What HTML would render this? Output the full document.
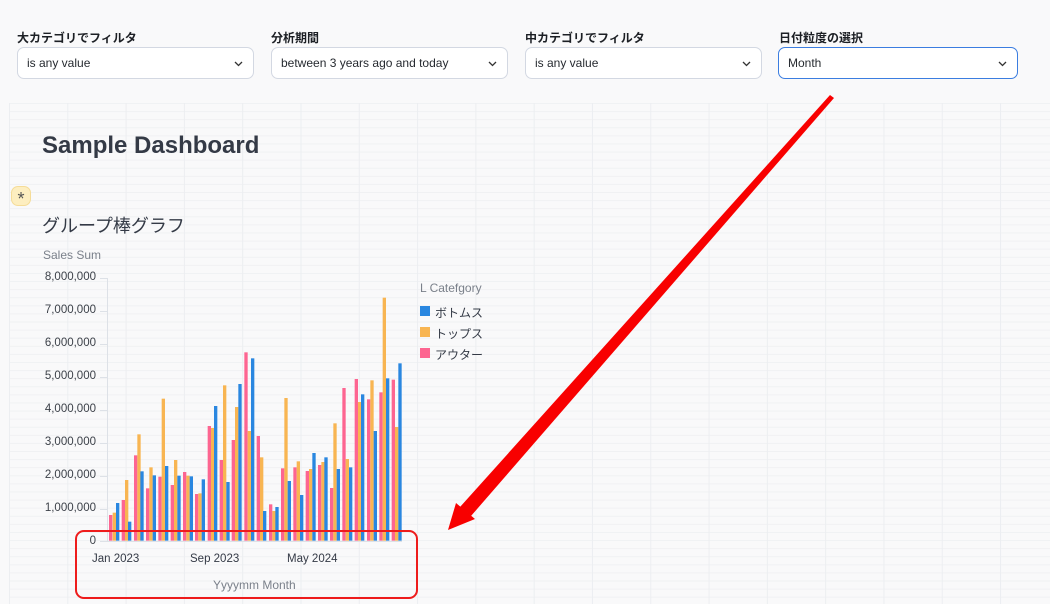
<!DOCTYPE html>
<html><head><meta charset="utf-8"><style>
body{margin:0;width:1050px;height:604px;overflow:hidden;background:#f9f9fa;font-family:"Liberation Sans","Noto Sans CJK JP",sans-serif;position:relative}
.grid{position:absolute;left:9px;top:103px;width:1041px;height:501px;
background-image:linear-gradient(to right,#eceef1 1px,transparent 1px),linear-gradient(to bottom,#f0f1f3 1px,transparent 1px);
background-size:58.3px 100%,100% 8.1px;}
.lbl{position:absolute;top:29px;font-size:12px;font-weight:bold;color:#1c1f24}
.sel{position:absolute;top:47px;height:32px;width:237px;box-sizing:border-box;border:1px solid #d3d8e2;border-radius:7px;background:#fff;font-size:12px;color:#262a30;line-height:31px;padding-left:9px}
.sel svg{position:absolute;right:10px;top:13px}
.t{position:absolute;color:#343a46}
.yl{position:absolute;right:954px;font-size:11.5px;color:#3c4149;text-align:right}
</style></head><body>
<div class="grid"></div>
<div class="lbl" style="left:17px">大カテゴリでフィルタ</div>
<div class="lbl" style="left:271px">分析期間</div>
<div class="lbl" style="left:525px">中カテゴリでフィルタ</div>
<div class="lbl" style="left:779px">日付粒度の選択</div>
<div class="sel" style="left:17px">is any value<svg width="9" height="6"><path d="M1 1l3.5 3.5L8 1" fill="none" stroke="#333" stroke-width="1.3"/></svg></div>
<div class="sel" style="left:271px">between 3 years ago and today<svg width="9" height="6"><path d="M1 1l3.5 3.5L8 1" fill="none" stroke="#333" stroke-width="1.3"/></svg></div>
<div class="sel" style="left:525px">is any value<svg width="9" height="6"><path d="M1 1l3.5 3.5L8 1" fill="none" stroke="#333" stroke-width="1.3"/></svg></div>
<div class="sel" style="left:778px;width:240px;border-color:#3b7de0;border-width:1.5px">Month<svg width="9" height="6"><path d="M1 1l3.5 3.5L8 1" fill="none" stroke="#333" stroke-width="1.3"/></svg></div>
<div class="t" style="left:42px;top:132px;font-size:24px;font-weight:bold">Sample Dashboard</div>
<div style="position:absolute;left:11px;top:186px;width:20px;height:20px;border-radius:7px;background:#fdeec0;border:1px solid #f5dc98;box-sizing:border-box;text-align:center;font-size:18px;line-height:24px;color:#555">*</div>
<div class="t" style="left:42px;top:212px;font-size:18px">グループ棒グラフ</div>
<div class="t" style="left:43px;top:248px;font-size:12px;color:#7a808a">Sales Sum</div>
<div class="yl" style="top:271px">8,000,000</div>
<div class="yl" style="top:304px">7,000,000</div>
<div class="yl" style="top:337px">6,000,000</div>
<div class="yl" style="top:370px">5,000,000</div>
<div class="yl" style="top:403px">4,000,000</div>
<div class="yl" style="top:436px">3,000,000</div>
<div class="yl" style="top:469px">2,000,000</div>
<div class="yl" style="top:502px">1,000,000</div>
<div class="yl" style="top:535px">0</div>
<div class="t" style="left:92px;top:553px;font-size:11.5px">Jan 2023</div>
<div class="t" style="left:190px;top:553px;font-size:11.5px">Sep 2023</div>
<div class="t" style="left:287px;top:553px;font-size:11.5px">May 2024</div>
<div class="t" style="left:213px;top:578px;font-size:12px;color:#7a808a">Yyyymm Month</div>
<div class="t" style="left:420px;top:281px;font-size:12px;color:#7a808a">L Catefgory</div>
<div style="position:absolute;left:420px;top:306px;width:10px;height:10px;background:#2a87e0"></div>
<div class="t" style="left:435px;top:304px;font-size:12px">ボトムス</div>
<div style="position:absolute;left:420px;top:327px;width:10px;height:10px;background:#f8b552"></div>
<div class="t" style="left:435px;top:325px;font-size:12px">トップス</div>
<div style="position:absolute;left:420px;top:348px;width:10px;height:10px;background:#fd6591"></div>
<div class="t" style="left:435px;top:346px;font-size:12px">アウター</div>
<svg width="1050" height="604" style="position:absolute;left:0;top:0">
<g stroke="#dde1e7" stroke-width="1"><line x1="107.5" y1="278" x2="107.5" y2="541"/>
<line x1="100" y1="278.5" x2="107" y2="278.5"/><line x1="100" y1="311.5" x2="107" y2="311.5"/><line x1="100" y1="344.5" x2="107" y2="344.5"/><line x1="100" y1="377.5" x2="107" y2="377.5"/><line x1="100" y1="410.5" x2="107" y2="410.5"/><line x1="100" y1="443.5" x2="107" y2="443.5"/><line x1="100" y1="476.5" x2="107" y2="476.5"/><line x1="100" y1="509.5" x2="107" y2="509.5"/><line x1="100" y1="541.5" x2="402" y2="541.5"/></g>
<g transform="translate(60,270) scale(0.33333)">
<g fill="#fd6591">
<rect x="147" y="735" width="10" height="77"/><rect x="185" y="690" width="10" height="122"/><rect x="222" y="556" width="10" height="256"/><rect x="258" y="655" width="10" height="157"/><rect x="295" y="620" width="10" height="192"/><rect x="332" y="645" width="10" height="167"/><rect x="369" y="606" width="10" height="206"/><rect x="405" y="672" width="10" height="140"/><rect x="443" y="468" width="10" height="344"/><rect x="479" y="570" width="10" height="242"/><rect x="515" y="510" width="10" height="302"/><rect x="553" y="247" width="10" height="565"/><rect x="590" y="498" width="10" height="314"/><rect x="627" y="703" width="10" height="109"/><rect x="663" y="595" width="10" height="217"/><rect x="700" y="592" width="10" height="220"/><rect x="737" y="603" width="10" height="209"/><rect x="774" y="585" width="10" height="227"/><rect x="810" y="654" width="10" height="158"/><rect x="847" y="354" width="10" height="458"/><rect x="884" y="327" width="10" height="485"/><rect x="921" y="388" width="10" height="424"/><rect x="958" y="367" width="10" height="445"/><rect x="995" y="329" width="10" height="483"/>
</g>
<g fill="#f8b552">
<rect x="158" y="728" width="10" height="84"/><rect x="195" y="630" width="10" height="182"/><rect x="232" y="493" width="10" height="319"/><rect x="268" y="592" width="10" height="220"/><rect x="305" y="386" width="10" height="426"/><rect x="342" y="570" width="10" height="242"/><rect x="379" y="617" width="10" height="195"/><rect x="415" y="670" width="10" height="142"/><rect x="453" y="474" width="10" height="338"/><rect x="489" y="346" width="10" height="466"/><rect x="525" y="411" width="10" height="401"/><rect x="563" y="483" width="10" height="329"/><rect x="600" y="562" width="10" height="250"/><rect x="637" y="723" width="10" height="89"/><rect x="673" y="384" width="10" height="428"/><rect x="710" y="574" width="10" height="238"/><rect x="747" y="597" width="10" height="215"/><rect x="784" y="576" width="10" height="236"/><rect x="820" y="460" width="10" height="352"/><rect x="857" y="567" width="10" height="245"/><rect x="894" y="396" width="10" height="416"/><rect x="931" y="331" width="10" height="481"/><rect x="968" y="83" width="10" height="729"/><rect x="1005" y="471" width="10" height="341"/>
</g>
<g fill="#2a87e0">
<rect x="168" y="699" width="10" height="113"/><rect x="204" y="755" width="10" height="57"/><rect x="241" y="604" width="10" height="208"/><rect x="278" y="616" width="10" height="196"/><rect x="315" y="588" width="10" height="224"/><rect x="352" y="617" width="10" height="195"/><rect x="389" y="619" width="10" height="193"/><rect x="425" y="628" width="10" height="184"/><rect x="462" y="408" width="10" height="404"/><rect x="499" y="636" width="10" height="176"/><rect x="535" y="342" width="10" height="470"/><rect x="573" y="265" width="10" height="547"/><rect x="609" y="723" width="10" height="89"/><rect x="646" y="711" width="10" height="101"/><rect x="683" y="633" width="10" height="179"/><rect x="720" y="675" width="10" height="137"/><rect x="757" y="549" width="10" height="263"/><rect x="793" y="562" width="10" height="250"/><rect x="830" y="597" width="10" height="215"/><rect x="867" y="592" width="10" height="220"/><rect x="903" y="373" width="10" height="439"/><rect x="941" y="483" width="10" height="329"/><rect x="978" y="325" width="10" height="487"/><rect x="1015" y="280" width="10" height="532"/>
</g></g>
<rect x="76" y="531" width="341" height="67" rx="8" fill="none" stroke="#ee1c1c" stroke-width="2"/>
<polygon points="830,95 834,98 471,516 460,507" fill="#f80000"/>
<polygon points="448,530 456,503 475,519" fill="#f80000"/>
</svg>
</body></html>
